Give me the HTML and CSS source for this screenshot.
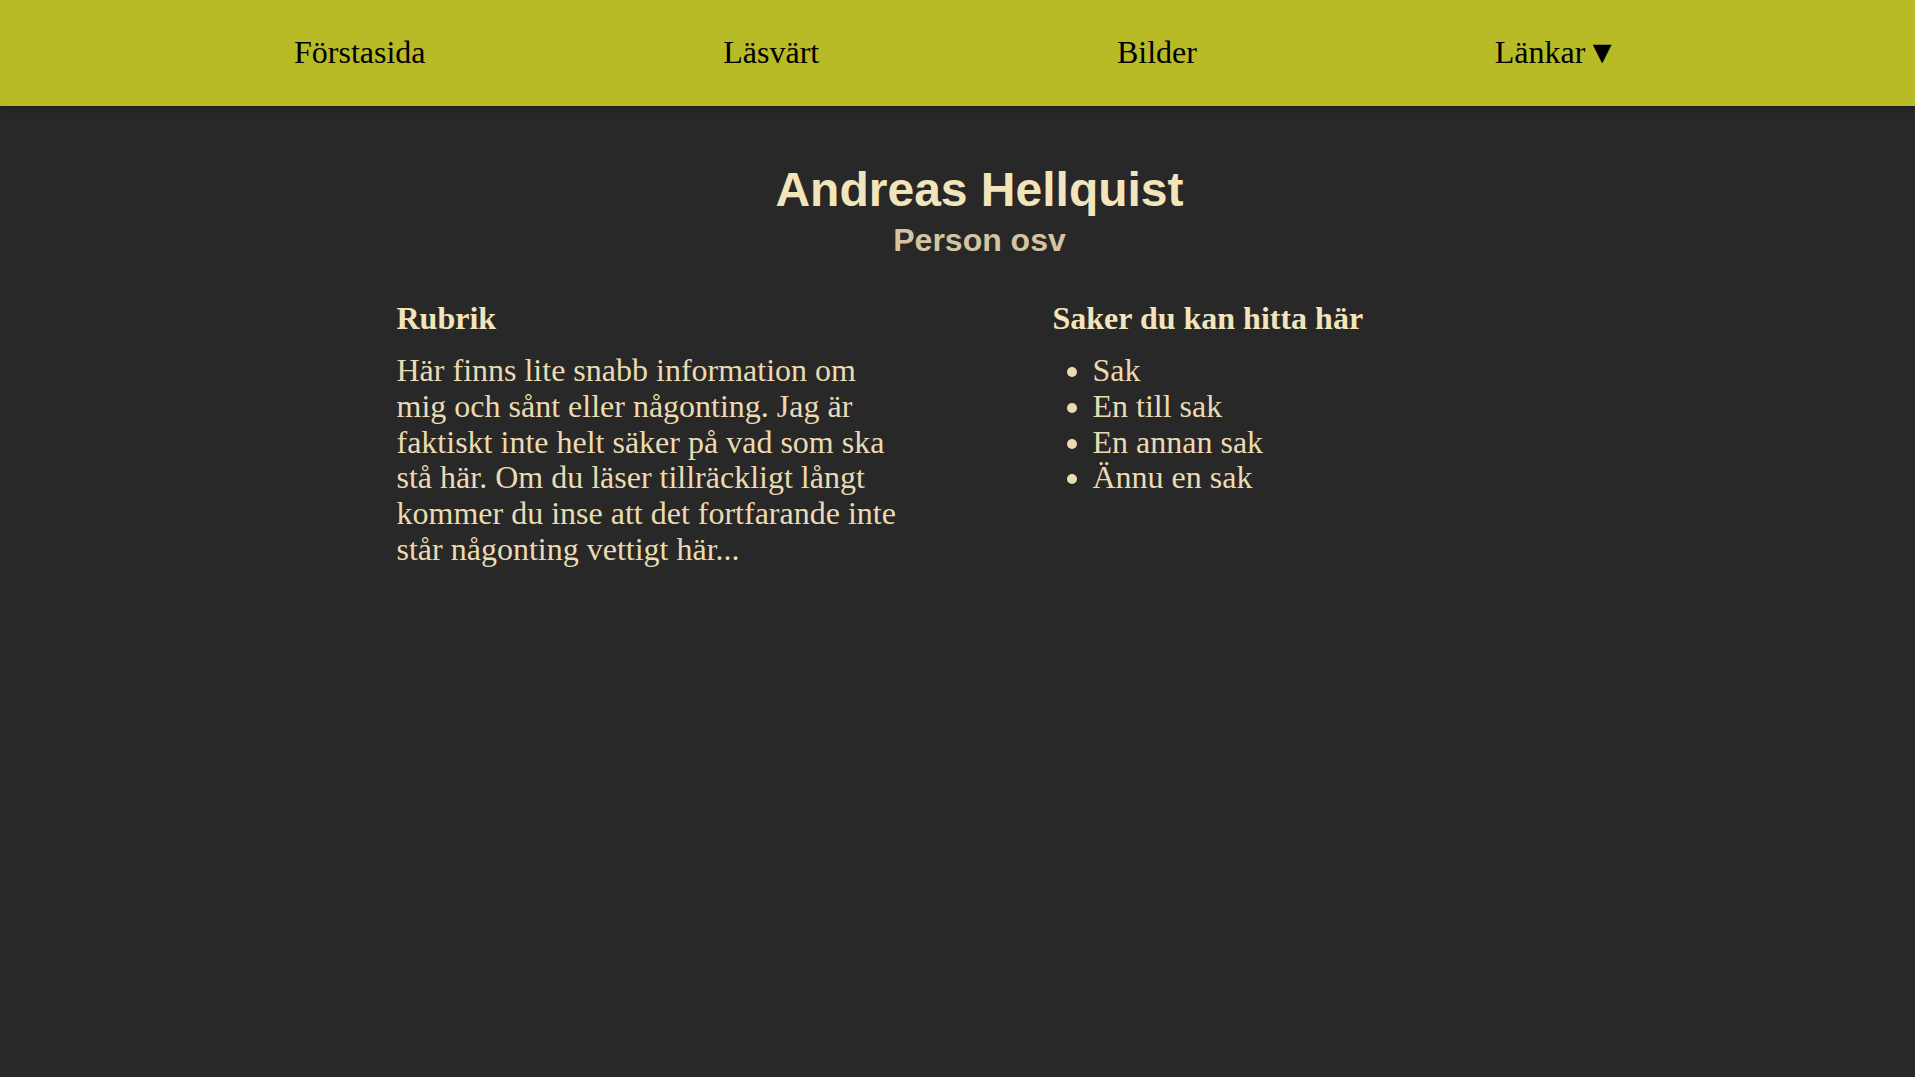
FILE: index.html
```html
<!DOCTYPE html>
<html lang="sv">
<head>
<meta charset="utf-8">
<title>Andreas Hellquist</title>
<link rel="stylesheet" href="styles.css">
</head>
<body>
<nav class="topnav">
  <ul class="nav-list">
    <li><a href="#">Förstasida</a></li>
    <li><a href="#">Läsvärt</a></li>
    <li><a href="#">Bilder</a></li>
    <li><a href="#">Länkar<span class="caret">▼</span></a></li>
  </ul>
</nav>
<main class="page">
  <header class="intro">
    <h1 class="name">Andreas Hellquist</h1>
    <h2 class="tagline">Person osv</h2>
  </header>
  <div class="columns">
    <section class="col">
      <h3 class="col-title">Rubrik</h3>
      <p class="col-text">Här finns lite snabb information om mig och sånt eller någonting. Jag är faktiskt inte helt säker på vad som ska stå här. Om du läser tillräckligt långt kommer du inse att det fortfarande inte står någonting vettigt här...</p>
    </section>
    <section class="col">
      <h3 class="col-title">Saker du kan hitta här</h3>
      <ul class="col-list">
        <li>Sak</li>
        <li>En till sak</li>
        <li>En annan sak</li>
        <li>Ännu en sak</li>
      </ul>
    </section>
  </div>
</main>
</body>
</html>
```

FILE: styles.css
```css
html, body {
  margin: 0;
  padding: 0;
}

body {
  background: #282828;
  color: #ebdbb2;
  font-family: "Liberation Serif", "Times New Roman", serif;
  min-height: 100vh;
}

.topnav {
  background: #b8bb26;
  height: 106px;
  box-sizing: border-box;
  padding-bottom: 2px;
  display: flex;
  align-items: center;
  box-shadow: 0 2px 5px rgba(0, 0, 0, 0.35);
  position: relative;
}

.nav-list {
  list-style: none;
  margin: 0;
  padding: 0 297px 0 294px;
  width: 100%;
  display: flex;
  justify-content: space-between;
  font-size: 32px;
}

.nav-list a {
  color: #000;
  text-decoration: none;
}

.caret {
  margin-left: 1px;
}

.page {
  width: 1166px;
  margin: 0 auto;
  padding-left: 44px;
}

.intro {
  text-align: center;
  padding-top: 56px;
}

.name {
  margin: 0;
  font-family: "Liberation Sans", Arial, sans-serif;
  font-weight: bold;
  font-size: 48px;
  line-height: 56px;
  color: #f2e5bc;
}

.tagline {
  margin: 4px 0 0;
  font-family: "Liberation Sans", Arial, sans-serif;
  font-weight: bold;
  font-size: 32px;
  line-height: 36px;
  color: #d5c4a1;
}

.columns {
  display: grid;
  grid-template-columns: 510px 510px;
  column-gap: 146px;
  margin-top: 42px;
}

.col-title {
  margin: 0;
  font-size: 32px;
  line-height: 36px;
  font-weight: bold;
  color: #f2e5bc;
}

.col-text {
  margin: 17px 0 0;
  font-size: 32px;
  line-height: 1.12;
}

.col-list {
  margin: 17px 0 0;
  padding-left: 40px;
  font-size: 32px;
  line-height: 1.12;
}
```
